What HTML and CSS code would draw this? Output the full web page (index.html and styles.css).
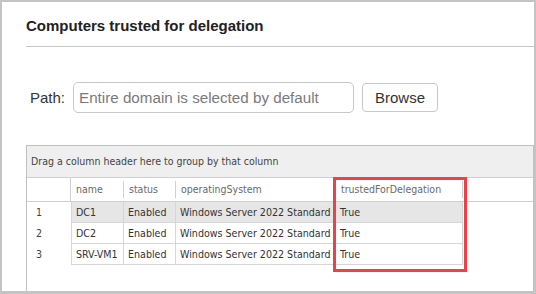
FILE: index.html
```html
<!DOCTYPE html>
<html lang="en">
<head>
    <meta charset="UTF-8">
    <title>Computers trusted for delegation</title>
    <link rel="stylesheet" href="styles.css">
</head>
<body>

    <div class="cornice">
        <h2 class="titolo">Computers trusted for delegation</h2>

        <div class="riga-percorso">
            <label class="etichetta" for="percorso">Path:</label>
            <input type="text" id="percorso" class="campo-percorso" placeholder="Entire domain is selected by default">
            <button type="button" class="bottone-sfoglia">Browse</button>
        </div>

        <div class="griglia">
            <div class="pannello-gruppi">Drag a column header here to group by that column</div>

            <div class="intestazione">
                <div class="cella-indicatore"></div>
                <div class="cella-testa prima">name</div>
                <div class="cella-testa">status</div>
                <div class="cella-testa">operatingSystem</div>
                <div class="cella-testa">trustedForDelegation</div>
            </div>

            <div class="riga selezionata">
                <div class="cella-indicatore">1</div>
                <div class="cella prima">DC1</div>
                <div class="cella">Enabled</div>
                <div class="cella">Windows Server 2022 Standard</div>
                <div class="cella">True</div>
            </div>
            <div class="riga">
                <div class="cella-indicatore">2</div>
                <div class="cella prima">DC2</div>
                <div class="cella">Enabled</div>
                <div class="cella">Windows Server 2022 Standard</div>
                <div class="cella">True</div>
            </div>
            <div class="riga">
                <div class="cella-indicatore">3</div>
                <div class="cella prima">SRV-VM1</div>
                <div class="cella">Enabled</div>
                <div class="cella">Windows Server 2022 Standard</div>
                <div class="cella">True</div>
            </div>

            <!-- riquadro rosso di evidenziazione -->
            <div class="evidenzia"></div>
        </div>
    </div>

</body>
</html>
```

FILE: styles.css
```css
body {
    margin: 0;
    font-family: "Liberation Sans", Arial, sans-serif;
    background-color: #fff;
}

.cornice {
    width: 536px;
    height: 294px;
    box-sizing: border-box;
    border: 2px solid #c4c4c4;
    border-bottom-width: 3px;
    display: flex;
    flex-direction: column;
}

.titolo {
    margin: 0 0 0 24px;
    padding: 14px 0 10px 0;
    font-size: 15px;
    line-height: 20px;
    font-weight: bold;
    color: #222;
    border-bottom: 1px solid #c8c8c8;
}

.riga-percorso {
    display: flex;
    align-items: center;
    gap: 8px;
    margin: 35px 0 0 28px;
    height: 31px;
}

.etichetta {
    font-size: 15px;
    color: #333;
}

.campo-percorso {
    width: 281px;
    height: 31px;
    box-sizing: border-box;
    border: 1px solid #c8c8c8;
    border-radius: 5px;
    padding: 0 5px;
    font-family: "Liberation Sans", Arial, sans-serif;
    font-size: 15.2px;
    color: #333;
}

.campo-percorso::placeholder {
    color: #7a7a7a;
}

.bottone-sfoglia {
    width: 76px;
    height: 29px;
    box-sizing: border-box;
    background-color: #fff;
    border: 1px solid #c8c8c8;
    border-radius: 4px;
    font-family: "Liberation Sans", Arial, sans-serif;
    font-size: 15px;
    color: #333;
    padding: 0;
}

.griglia {
    position: relative;
    flex: 1;
    margin: 32px 0 0 24px;
    border: 1px solid #c0c0c0;
    border-bottom: none;
    font-family: "DejaVu Sans Condensed", "Liberation Sans Narrow", sans-serif;
    font-size: 10.6px;
}

.pannello-gruppi {
    height: 31px;
    line-height: 31px;
    padding-left: 4px;
    background-color: #efefef;
    border-bottom: 1px solid #d0d0d0;
    color: #444;
    font-size: 10.5px;
}

.intestazione,
.riga {
    display: grid;
    grid-template-columns: 44px 53px 52px 160px 127px;
}

.intestazione {
    height: 23px;
    border-bottom: 1px solid #d0d0d0;
    color: #6a6a6a;
    font-size: 10.5px;
}

.cella-indicatore {
    padding-left: 9px;
    line-height: 20px;
    color: #444;
}

.intestazione .cella-indicatore {
    border-right: 1px solid #d0d0d0;
}

.cella-testa {
    line-height: 23px;
    padding-left: 5px;
    border-right: 1px solid #d0d0d0;
    border-image: linear-gradient(to bottom, transparent 4px, #d0d0d0 4px, #d0d0d0 19px, transparent 19px) 1;
    border-left: none;
    white-space: nowrap;
}

.riga {
    height: 21px;
    color: #333;
}

.cella {
    line-height: 20px;
    padding-left: 4px;
    border-right: 1px solid #d6d6d6;
    border-bottom: 1px solid #d6d6d6;
    white-space: nowrap;
    overflow: hidden;
}

.cella.prima {
    border-left: 1px solid #d6d6d6;
}

.riga.selezionata .cella {
    background-color: #e6e6e6;
}

.evidenzia {
    position: absolute;
    left: 306px;
    top: 31px;
    width: 134px;
    height: 95px;
    box-sizing: border-box;
    border: 3px solid #e8434a;
}
```
